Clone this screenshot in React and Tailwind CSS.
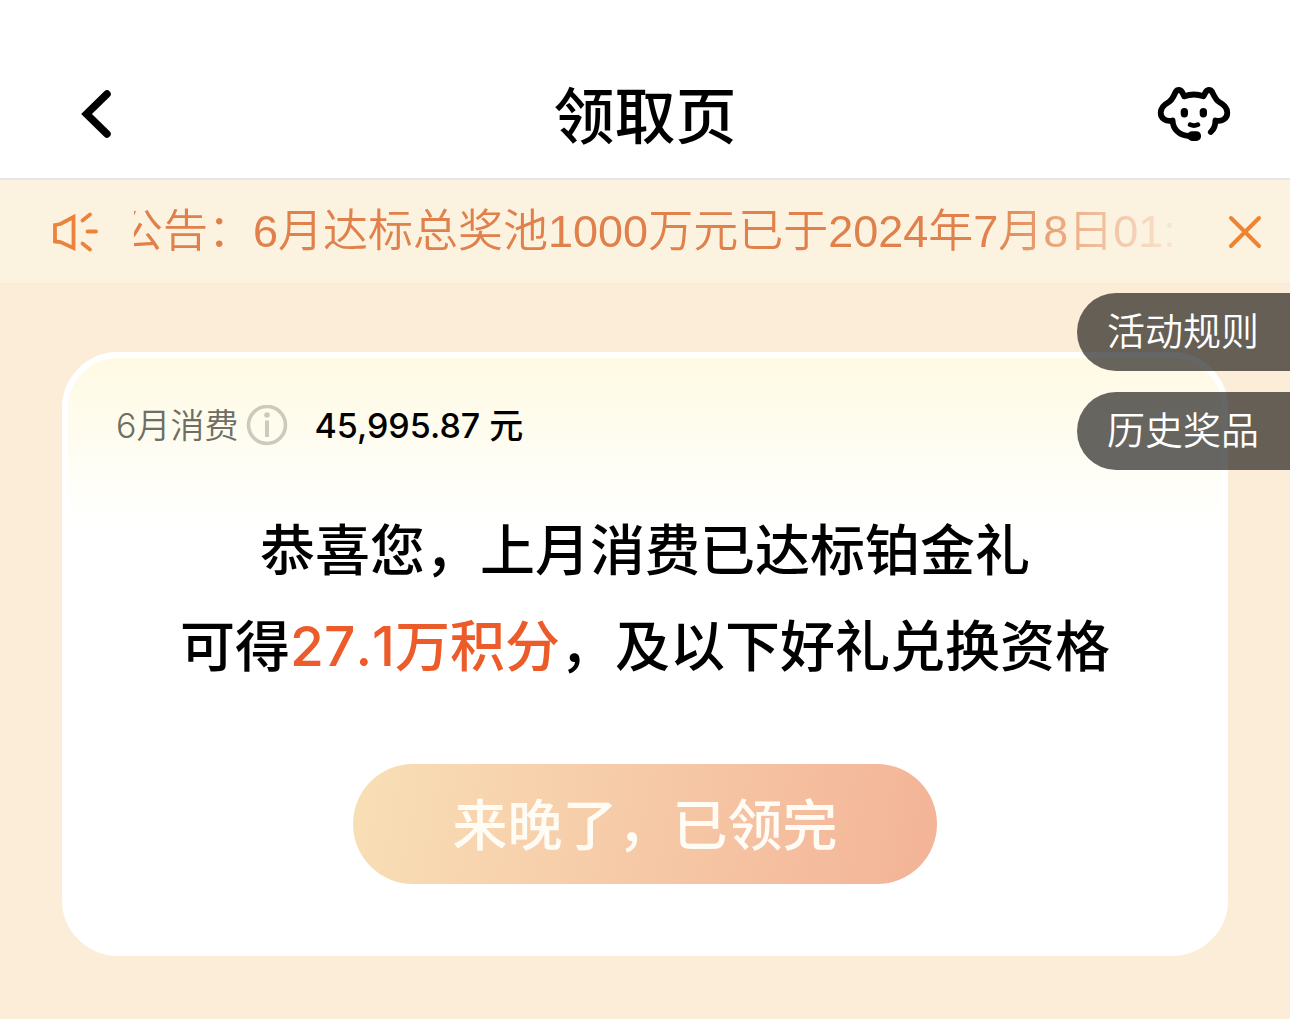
import React from "react";

function BackIcon() {
  return (
    <svg className="h-14 w-9" viewBox="0 0 36 56" fill="none" stroke="currentColor" strokeWidth="7.5" strokeLinecap="round" strokeLinejoin="miter" aria-hidden="true">
      <path d="M29 8 L8.500 28 L29 48" />
    </svg>
  );
}

function ServiceIcon() {
  return (
    <svg className="h-[60px] w-[76px]" viewBox="0 0 76 60" fill="none" stroke="currentColor" strokeWidth="5.8" strokeLinecap="round" strokeLinejoin="round" aria-hidden="true">
      <path d="M28.3 12.200 C34 10.200 42 10.200 47.500 12.200 L49.800 8 C51.300 5.300 54.600 5.300 56.200 8 C58 12 59.800 16.200 63.500 18.300 C68.500 21 71.300 24 71.300 28.700 C71.300 34.500 66 38.200 59.400 36.500 C59.600 41.500 58 45 54.800 48" />
      <path d="M28.3 12.200 L26 8 C24.500 5.300 21.200 5.300 19.600 8 C17.800 12 16.200 16.200 12.500 18.300 C7.500 21 4.700 24 4.700 28.700 C4.700 34.500 10 38.200 16.600 36.500 C16.800 45 23 51.500 33 52" />
      <g fill="currentColor" stroke="none">
        <rect x="24.700" y="24" width="7.300" height="9.400" rx="3.600" />
        <rect x="43.700" y="24" width="7.300" height="9.400" rx="3.600" />
        <rect x="31.500" y="47.300" width="13.500" height="9.600" rx="4.500" />
      </g>
      <path d="M34.200 40.700 C36.500 41.800 39.500 41.800 41.800 40.700" strokeWidth="4.800" />
    </svg>
  );
}

function HornIcon() {
  return (
    <svg className="h-12 w-12 shrink-0" viewBox="0 0 48 48" fill="none" stroke="#ed823c" strokeWidth="3.800" strokeLinecap="round" aria-hidden="true">
      <path d="M4 17 L9.500 16 L22.500 9 V40 L9.500 34 L4 33.500 Z" />
      <path d="M31.500 12.500 L39 6.500 M36.500 23.500 H45 M31.500 35.500 L39 41.500" />
    </svg>
  );
}

function CloseIcon() {
  return (
    <svg className="size-9" viewBox="0 0 36 36" fill="none" stroke="#ee8430" strokeWidth="4" strokeLinecap="round" aria-hidden="true">
      <path d="M4 4 L32 32 M32 4 L4 32" />
    </svg>
  );
}

function InfoIcon() {
  return (
    <svg className="size-[42px]" viewBox="0 0 42 42" fill="none" stroke="#cbcabb" strokeWidth="3.600" aria-hidden="true">
      <circle cx="21" cy="20" r="18.500" />
      <path d="M21 15.500 V32" strokeWidth="4" />
      <circle cx="21" cy="10" r="2.800" fill="#cbcabb" stroke="none" />
    </svg>
  );
}

const sideLinks = ["活动规则", "历史奖品"];

export default function App() {
  return (
    <div className="relative min-h-screen bg-[#fcedd8] font-['Liberation_Sans','Noto_Sans_CJK_SC',sans-serif] text-black">
      <header className="grid grid-cols-[1fr_auto_1fr] items-center border-b-2 border-[#e6e6e8] bg-white px-[58px] pt-[68px] pb-[18px]">
        <button type="button" aria-label="返回" className="justify-self-start pl-5">
          <BackIcon />
        </button>
        <h1 className="pt-2 text-[61px] leading-[84px] font-medium">领取页</h1>
        <button type="button" aria-label="客服" className="justify-self-end">
          <ServiceIcon />
        </button>
      </header>

      <section aria-label="公告" className="flex items-center border-b border-[#f8ead6] bg-[#fcf2e0] pr-[27px] pl-[51px]">
        <HornIcon />
        <div className="ml-[35px] min-w-0 flex-1 overflow-hidden mask-r-from-82% mask-r-to-102%">
          <p className="-ml-4 text-[45px] leading-[103px] font-[350] whitespace-nowrap text-[#e0804a]">
            公告：6月达标总奖池1000万元已于2024年7月8日01:
          </p>
        </div>
        <button type="button" aria-label="关闭公告" className="ml-[54px]">
          <CloseIcon />
        </button>
      </section>

      <main className="px-[62px] pt-[68px] pb-16">
        <section className="rounded-[56px] border-6 border-white bg-linear-to-b from-[#fefae3] to-white to-[170px] px-12 pt-[43px] pb-[66px]">
          <div className="flex items-center font-['Inter','Noto_Sans_CJK_SC',sans-serif] text-[34px] leading-[50px]">
            <span className="font-[350] text-[#6e6e64]">6月消费</span>
            <button type="button" aria-label="消费说明" className="ml-2">
              <InfoIcon />
            </button>
            <span className="ml-[26px] font-medium">45,995.87 元</span>
          </div>
          <h2 className="mt-[51px] text-center font-['Inter','Noto_Sans_CJK_SC',sans-serif] text-[55px] leading-[96px] font-medium [font-kerning:none]">
            恭喜您，上月消费已达标铂金礼
            <br />
            可得<span className="text-[#ec5b2a]">27.1万积分</span>，及以下好礼兑换资格
          </h2>
          <button
            type="button"
            className="mx-auto mt-[70px] block h-[120px] w-[584px] max-w-full rounded-full bg-linear-100 from-[#f8dfb6] to-[#f3b397] pt-1 text-[55px] font-medium text-[#fffcf6]"
          >
            来晚了，已领完
          </button>
        </section>
      </main>

      <nav aria-label="活动入口" className="absolute top-[293px] right-0 flex flex-col gap-[21px]">
        {sideLinks.map((label) => (
          <a key={label} href="#" className="rounded-l-full bg-black/60 pr-[31px] pl-[30px] text-[38px] leading-[78px] font-[350] text-white">
            {label}
          </a>
        ))}
      </nav>
    </div>
  );
}
